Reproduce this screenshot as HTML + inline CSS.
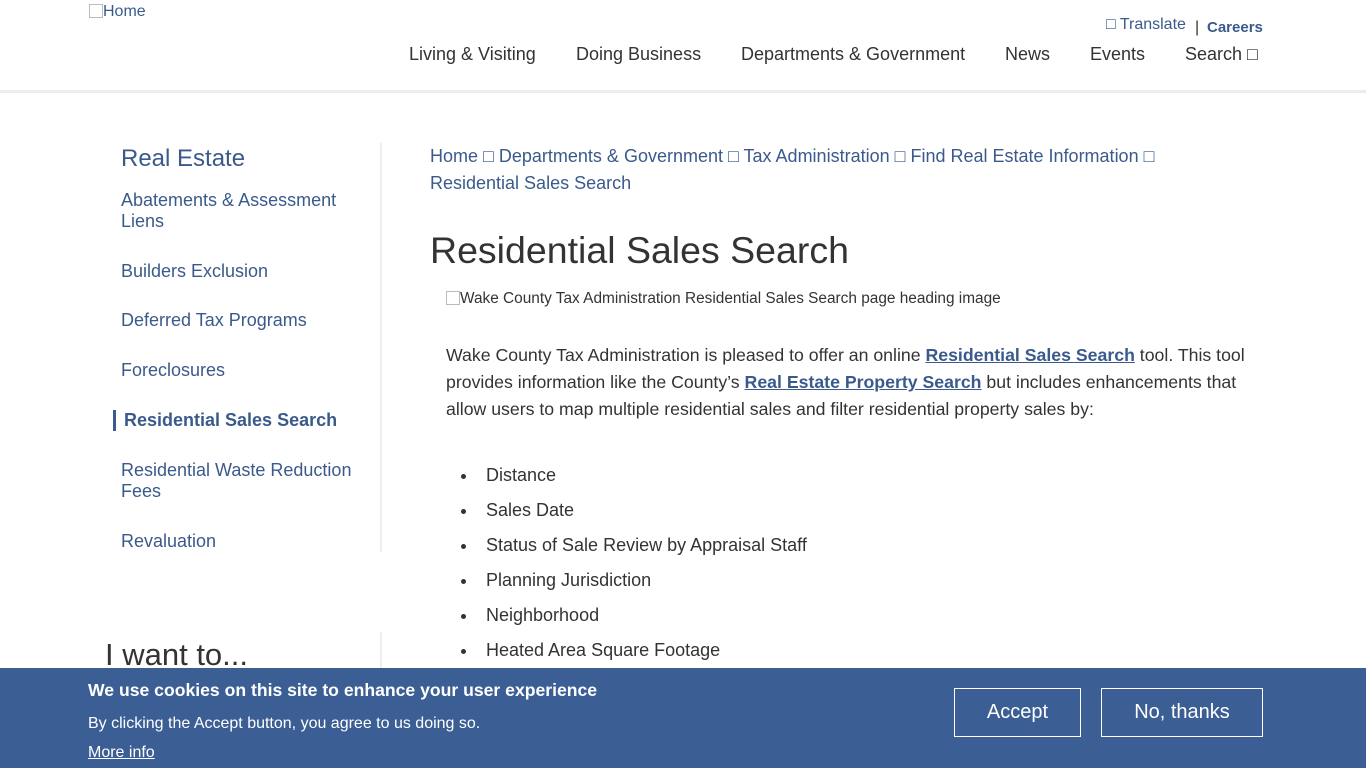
<!DOCTYPE html>
<html><head><meta charset="utf-8"><style>
*{margin:0;padding:0;box-sizing:border-box}
body{width:1366px;height:768px;overflow:hidden;background:#fff;font-family:"Liberation Sans",sans-serif;color:#333;position:relative}
.a{position:absolute;white-space:nowrap}
.nav{font-size:18px;color:#333;top:44px}
.blue{color:#3a5a8c}
.side{font-size:18px;color:#3a5a8c;left:121px;line-height:21px}
.bc{font-size:18px;color:#3a5a8c}
.p{font-size:17.7px;color:#333;left:446px}
.p a{color:#3a5a8c;font-weight:bold;text-decoration:underline}
.li{font-size:18px;left:486px;color:#333}
.li:before{content:"";position:absolute;left:-25px;top:9px;width:5px;height:5px;border-radius:50%;background:#333}
.btn{position:absolute;top:688px;height:49px;border:1px solid #fff;color:#fff;font-size:20px;text-align:center;line-height:47px}
</style></head><body>
<div class="a" style="left:89px;top:3px;font-size:16px;color:#3a5a8c"><span style="display:inline-block;width:14px;height:14px;border:1px solid #bbb;vertical-align:-2px;margin-right:0"></span>Home</div>
<div class="a blue" style="left:1106px;top:16px;font-size:16px">&#9633; Translate</div>
<div class="a" style="left:1195px;top:19px;font-size:16px;color:#333">|</div>
<div class="a blue" style="left:1207px;top:19px;font-size:15px;font-weight:bold">Careers</div>
<div class="a nav" style="left:409px">Living &amp; Visiting</div>
<div class="a nav" style="left:576px">Doing Business</div>
<div class="a nav" style="left:741px">Departments &amp; Government</div>
<div class="a nav" style="left:1005px">News</div>
<div class="a nav" style="left:1090px">Events</div>
<div class="a nav" style="left:1185px">Search &#9633;</div>
<div style="position:absolute;left:0;top:90px;width:1366px;height:3px;background:#ececec"></div>

<div style="position:absolute;left:380px;top:143px;width:2px;height:409px;background:#eee"></div>
<div style="position:absolute;left:380px;top:632px;width:2px;height:40px;background:#eee"></div>
<div class="a" style="left:121px;top:145px;font-size:24px;color:#3a5a8c">Real Estate</div>
<div class="a side" style="top:190px">Abatements &amp; Assessment<br>Liens</div>
<div class="a side" style="top:261px">Builders Exclusion</div>
<div class="a side" style="top:310px">Deferred Tax Programs</div>
<div class="a side" style="top:360px">Foreclosures</div>
<div style="position:absolute;left:113px;top:410px;width:3px;height:21px;background:#3a5a8c"></div>
<div class="a side" style="top:410px;left:124px;font-weight:bold">Residential Sales Search</div>
<div class="a side" style="top:460px">Residential Waste Reduction<br>Fees</div>
<div class="a side" style="top:531px">Revaluation</div>
<div class="a" style="left:105px;top:637px;font-size:31px;color:#333">I want to...</div>

<div class="a bc" style="left:430px;top:146px">Home &#9633; Departments &amp; Government &#9633; Tax Administration &#9633; Find Real Estate Information &#9633;</div>
<div class="a bc" style="left:430px;top:173px">Residential Sales Search</div>
<div class="a" style="left:430px;top:229px;font-size:37.5px;color:#333">Residential Sales Search</div>
<div class="a" style="left:446px;top:290px;font-size:15.4px;color:#333"><span style="display:inline-block;width:14px;height:14px;border:1px solid #bbb;vertical-align:-2px"></span>Wake County Tax Administration Residential Sales Search page heading image</div>
<div class="a p" style="top:345px">Wake County Tax Administration is pleased to offer an online <a>Residential Sales Search</a> tool. This tool</div>
<div class="a p" style="top:372px">provides information like the County’s <a>Real Estate Property Search</a> but includes enhancements that</div>
<div class="a p" style="top:399px">allow users to map multiple residential sales and filter residential property sales by:</div>
<div class="a li" style="top:465px">Distance</div>
<div class="a li" style="top:500px">Sales Date</div>
<div class="a li" style="top:535px">Status of Sale Review by Appraisal Staff</div>
<div class="a li" style="top:570px">Planning Jurisdiction</div>
<div class="a li" style="top:605px">Neighborhood</div>
<div class="a li" style="top:640px">Heated Area Square Footage</div>

<div style="position:absolute;left:0;top:668px;width:1366px;height:100px;background:#3b5e95"></div>
<div class="a" style="left:88px;top:680px;font-size:17.6px;font-weight:bold;color:#fff">We use cookies on this site to enhance your user experience</div>
<div class="a" style="left:88px;top:715px;font-size:16px;color:#fff">By clicking the Accept button, you agree to us doing so.</div>
<div class="a" style="left:88px;top:744px;font-size:16px;color:#fff;text-decoration:underline">More info</div>
<div class="btn" style="left:954px;width:127px">Accept</div>
<div class="btn" style="left:1101px;width:162px">No, thanks</div>
</body></html>
